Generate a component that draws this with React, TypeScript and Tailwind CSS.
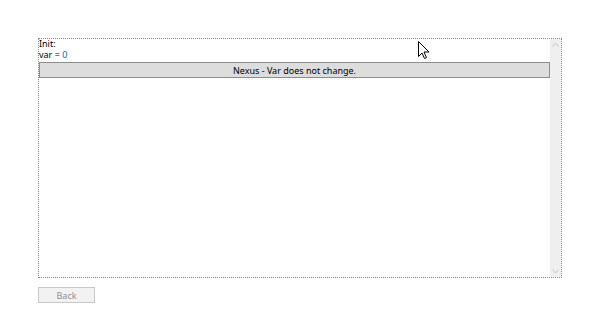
export default function App() {
  return (
    <div className="relative h-[315px] w-[600px] bg-white font-['Noto_Sans',sans-serif] text-[9px] text-black">
      <div className="pt-[38px] pl-[38px]">
        <div className="flex h-[240px] w-[524px] border border-dotted border-[#8a8a8a]">
          <div className="flex min-w-0 flex-1 flex-col">
            <div className="h-[10px] leading-[10px]">Init:</div>
            <div className="h-[11px] leading-[11px]">
              var = <span className="text-[#2a5db0]">0</span>
            </div>
            <div className="mt-[2px] flex h-[16px] items-center justify-center border border-[#8d8d8d] bg-[#dddddd] leading-none">
              Nexus - Var does not change.
            </div>
          </div>
          <div className="flex w-[11px] flex-col items-center justify-between bg-[#efefef] py-[3px]">
            <svg width="7" height="5" viewBox="0 0 7 5" fill="none">
              <path d="M0.5 4.5 L3.5 1 L6.5 4.5" stroke="#c2c2c2" strokeWidth="1" />
            </svg>
            <svg width="7" height="5" viewBox="0 0 7 5" fill="none">
              <path d="M0.5 0.5 L3.5 4 L6.5 0.5" stroke="#c2c2c2" strokeWidth="1" />
            </svg>
          </div>
        </div>
        <button className="mt-[9px] flex h-[16px] w-[57px] items-center justify-center border border-[#c8c8c8] bg-[#f2f2f2] text-[9px] leading-none text-[#8f8f8f]">
          Back
        </button>
      </div>
      <svg className="absolute left-[418px] top-[41px]" width="12" height="19" viewBox="0 0 12 19">
        <path d="M0.5 0.5 L0.5 15.5 L4 12 L6.5 17.5 L8.5 16.6 L6 11 L11 11 Z" fill="white" stroke="black" strokeWidth="1" strokeLinejoin="round" />
      </svg>
    </div>
  );
}
